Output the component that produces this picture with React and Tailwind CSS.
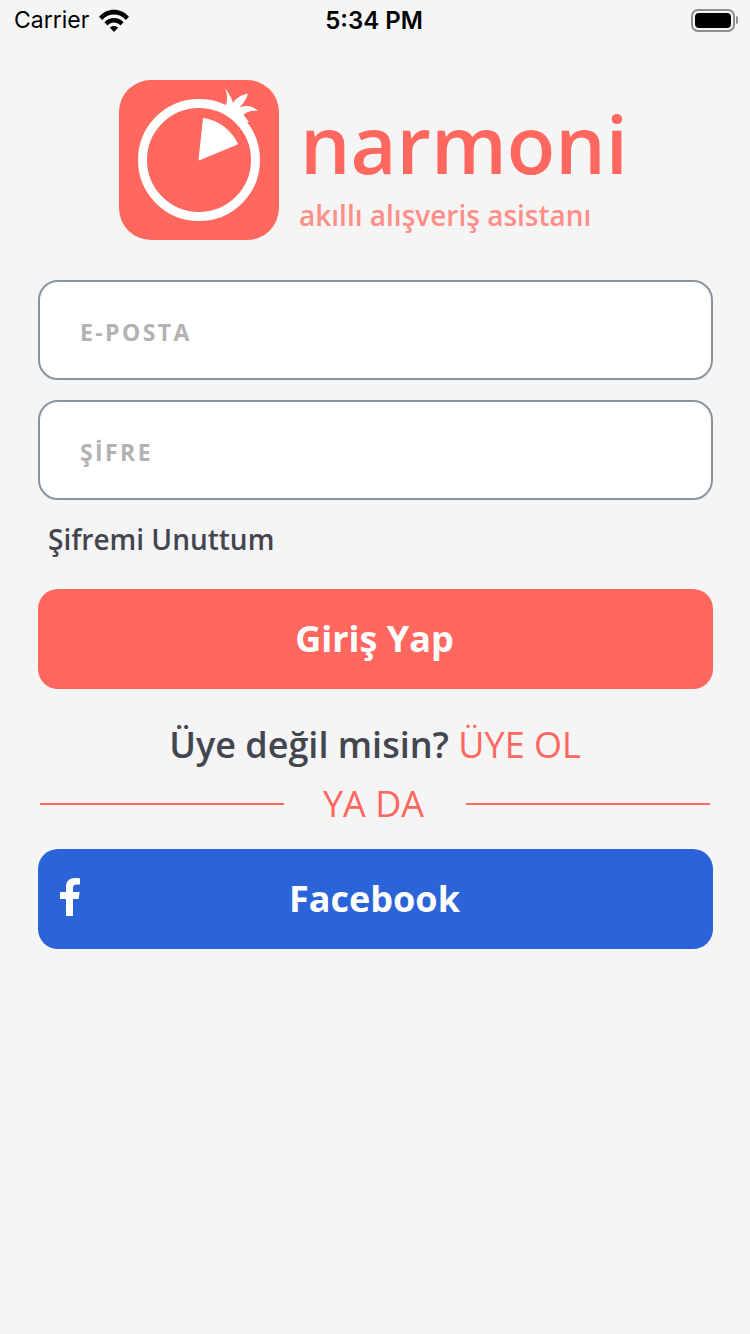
import React from "react";

const StatusBar = () => (
  <div className="h-10 flex items-center justify-between pl-[14px] pr-[12px] pt-[1px] text-black font-['Inter',sans-serif]">
    <div className="flex items-center gap-[10px] w-[200px]">
      <span className="text-[23px] leading-none">Carrier</span>
      <svg width="30" height="23" viewBox="0 0 30 23">
        <path d="M0 7.8 C8 -1.6 22 -1.6 30 7.8 L26.8 11 C20.2 3.8 9.8 3.8 3.2 11Z" fill="#000" />
        <path d="M5.4 13.2 C10.6 7.6 19.4 7.6 24.6 13.2 L21.4 16.4 C17.6 12.6 12.4 12.6 8.6 16.4Z" fill="#000" />
        <path d="M10.8 18.6 C13 16.4 17 16.4 19.2 18.6 L15 23Z" fill="#000" />
      </svg>
    </div>
    <span className="text-[24px] leading-none font-semibold mr-[4px]">5:34 PM</span>
    <div className="w-[200px] flex justify-end items-center -mt-[1px]">
      <div className="w-[44px] h-[23px] rounded-[7px] border-2 border-[#8e8e8e] p-[2px]">
        <div className="w-full h-full rounded-[4px] bg-black" />
      </div>
      <div className="w-[2px] h-[8px] ml-[1px] rounded-r-sm bg-[#8e8e8e]" />
    </div>
  </div>
);

const Logo = () => (
  <div className="w-40 h-40 rounded-[32px] bg-[#ff675f] shrink-0">
    <svg width="160" height="160" viewBox="0 0 160 160">
      <circle cx="80" cy="80" r="56.5" fill="none" stroke="#fff" strokeWidth="9" />
      <path d="M80 80 L84.5 38.5 C100 41 112 50 118.5 64Z" fill="#fff" stroke="#fff" strokeLinejoin="round" />
      {/* pomegranate crown */}
      <path d="M104 30 C109 24 109 16 106 8 C110 14 113 18 114 23 C117 18 122 15 129 13.5 C127 20 124 24 120.5 27.5 C126 25 133 25 139 31 C132 30 127 32 124.5 35 L130 42 L118 42Z" fill="#fff" />
    </svg>
  </div>
);

const Field = ({ label }) => (
  <div className="h-[100px] rounded-[20px] border-2 border-[#8a949e] bg-white flex items-center pl-[40px] pt-1">
    <span className="text-[23px] font-bold tracking-[2.4px] text-[#b2b2b2] leading-none">{label}</span>
  </div>
);

const Rule = () => <div className="h-[2px] w-[244px] bg-[#ff675f]" />;

export default function App() {
  return (
    <div className="min-h-[1334px] bg-[#f5f5f5] font-['Open_Sans',sans-serif]">
      <StatusBar />

      <div className="flex items-start pl-[119px] pt-10">
        <Logo />
        <div className="ml-[21px]">
          <div className="text-[79.5px] h-[80px] leading-none mt-[24px] font-semibold text-[#ff675f]">narmoni</div>
          <div className="text-[28px] leading-none mt-[17px] font-semibold text-[#ff8e88] -ml-[1px]">akıllı alışveriş asistanı</div>
        </div>
      </div>

      <div className="mx-[38px] mt-10 flex flex-col gap-5 w-[675px]">
        <Field label="E-POSTA" />
        <Field label="ŞİFRE" />
      </div>

      <div className="ml-[48px] mt-[20px] text-[28px] leading-[38px] font-semibold text-[#43464f]">Şifremi Unuttum</div>

      <button className="block mx-[38px] mt-[31px] pr-[2px] w-[675px] h-[100px] rounded-[20px] bg-[#ff675f] text-white text-[36px] leading-none font-bold">
        Giriş Yap
      </button>

      <div className="mt-[30px] text-center text-[36px] leading-[52px] font-semibold text-[#43464f]">
        Üye değil misin? <span className="font-normal text-[#ff675f]">ÜYE OL</span>
      </div>

      <div className="flex items-center justify-between mx-10 h-[50px] mt-[8px]">
        <Rule />
        <span className="text-[36px] mr-[3px] leading-none text-[#ff675f]">YA DA</span>
        <Rule />
      </div>

      <button className="relative flex items-center justify-center mx-[38px] mt-[20px] pr-[2px] w-[675px] h-[100px] rounded-[20px] bg-[#2b64d9] text-white text-[36px] font-bold">
        <svg className="absolute left-[22px] top-[29px]" width="20" height="38" viewBox="0 0 20 38">
          <path d="M6 38 V21 H0 V14 H6 V9 C6 3 9.5 0 15 0 C17 0 19 .2 20 .4 V6.6 H16.5 C14 6.6 13 8 13 10 V14 H19.6 L18.6 21 H13 V38Z" fill="#fff" />
        </svg>
        Facebook
      </button>
    </div>
  );
}
